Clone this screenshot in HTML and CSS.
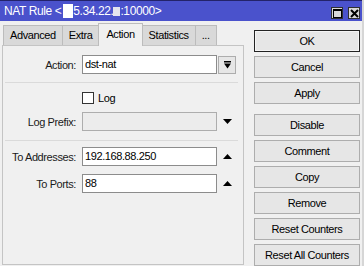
FILE: index.html
```html
<!DOCTYPE html>
<html lang="en">
<head>
    <meta charset="UTF-8">
    <meta name="viewport" content="width=device-width, initial-scale=1.0">
    <title>NAT Rule</title>
    <link rel="stylesheet" href="styles.css">
</head>
<body>
    <div class="window">
        <div class="titlebar">
            <span class="title">NAT Rule &lt;<span class="mask mask-a"></span>5.34.22.<span class="mask mask-b"></span>:10000&gt;</span>
            <div class="title-btns">
                <span class="tbtn">
                    <svg width="9" height="9" viewBox="0 0 9 9"><rect x="0.5" y="0.5" width="8" height="8" fill="none" stroke="#000"/><line x1="0" y1="1.5" x2="9" y2="1.5" stroke="#000"/></svg>
                </span>
                <span class="tbtn">
                    <svg width="9" height="9" viewBox="0 0 9 9"><path d="M1 1 L8 8 M8 1 L1 8" stroke="#000" stroke-width="2"/></svg>
                </span>
            </div>
        </div>

        <div class="main">
            <div class="left">
                <div class="tabs">
                    <span class="tab">Advanced</span>
                    <span class="tab">Extra</span>
                    <span class="tab active">Action</span>
                    <span class="tab">Statistics</span>
                    <span class="tab">...</span>
                </div>

                <div class="panel">
                    <div class="row">
                        <span class="label">Action:</span>
                        <span class="field">dst-nat</span>
                        <span class="dd">
                            <svg width="7" height="8" viewBox="0 0 7 8"><rect x="0" y="0" width="7" height="1.5" fill="#000"/><path d="M0 2.5 H7 L3.5 7.5 Z" fill="#000"/></svg>
                        </span>
                    </div>

                    <div class="sep"></div>

                    <div class="row check-row">
                        <span class="label"></span>
                        <span class="check"><span class="box"></span>Log</span>
                    </div>

                    <div class="row">
                        <span class="label">Log Prefix:</span>
                        <span class="field disabled"></span>
                        <span class="trail">
                            <svg width="9" height="5" viewBox="0 0 9 5"><path d="M0 0 H9 L4.5 5 Z" fill="#000"/></svg>
                        </span>
                    </div>

                    <div class="sep sep-2"></div>

                    <div class="row row-addr">
                        <span class="label">To Addresses:</span>
                        <span class="field">192.168.88.250</span>
                        <span class="trail">
                            <svg width="9" height="5" viewBox="0 0 9 5"><path d="M0 5 H9 L4.5 0 Z" fill="#000"/></svg>
                        </span>
                    </div>

                    <div class="row row-ports">
                        <span class="label">To Ports:</span>
                        <span class="field">88</span>
                        <span class="trail">
                            <svg width="9" height="5" viewBox="0 0 9 5"><path d="M0 5 H9 L4.5 0 Z" fill="#000"/></svg>
                        </span>
                    </div>
                </div>
            </div>

            <div class="buttons">
                <span class="btn default">OK</span>
                <span class="btn">Cancel</span>
                <span class="btn">Apply</span>
                <span class="btn group">Disable</span>
                <span class="btn">Comment</span>
                <span class="btn">Copy</span>
                <span class="btn">Remove</span>
                <span class="btn">Reset Counters</span>
                <span class="btn">Reset All Counters</span>
            </div>
        </div>
    </div>
</body>
</html>
```

FILE: styles.css
```css
* {
    margin: 0;
    padding: 0;
    box-sizing: border-box;
}

body {
    font-family: 'Liberation Sans', Arial, sans-serif;
    font-size: 11px;
    letter-spacing: -0.4px;
    color: #000;
    background: #f0f0f0;
    width: 364px;
    height: 266px;
    overflow: hidden;
}

.window {
    display: flex;
    flex-direction: column;
    height: 266px;
    border-right: 2px solid #d6d6d6;
}

/* title bar */
.titlebar {
    height: 24px;
    background: #4a52cc;
    border-top: 1px solid #23236a;
    display: flex;
    align-items: center;
    justify-content: space-between;
    padding: 0 2px 0 4px;
}

.title {
    color: #fff;
    font-size: 12px;
    display: flex;
    align-items: center;
}

.mask {
    display: inline-block;
    background: #fff;
}

.mask-a {
    width: 10px;
    height: 14px;
    margin-left: 2px;
}

.mask-b {
    width: 7px;
    height: 9px;
    background: #e4e4ee;
}

.title-btns {
    display: flex;
    gap: 5px;
    margin-top: 4px;
}

.tbtn {
    width: 12px;
    height: 12px;
    background: #d8d8d8;
    border: 1px solid #303030;
    display: flex;
    align-items: center;
    justify-content: center;
}

/* main area */
.main {
    display: flex;
    padding: 2px 0 0 2px;
}

.left {
    width: 242px;
}

.tabs {
    display: flex;
    align-items: flex-end;
    height: 22px;
    padding-left: 1px;
}

.tab {
    height: 20px;
    line-height: 19px;
    padding: 0 6px;
    background: #d9d9d9;
    border: 1px solid #bcbcbc;
    border-bottom: none;
    margin-right: -1px;
}

.tab.active {
    height: 23px;
    line-height: 20px;
    background: #f0f0f0;
    position: relative;
    z-index: 1;
    margin-bottom: -1px;
    padding: 0 7px;
}

.panel {
    height: 220px;
    border: 1px solid #c4c4c4;
    padding-top: 9px;
}

.row {
    display: flex;
    align-items: center;
    height: 19px;
}

.label {
    width: 73px;
    margin-right: 6px;
    text-align: right;
    color: #1a1a1a;
}

.field {
    width: 135px;
    height: 19px;
    line-height: 17px;
    background: #fff;
    border: 1px solid #8c8c8c;
    padding-left: 2px;
}

.field.disabled {
    background: #ececec;
    border-color: #adadad;
}

.dd {
    width: 18px;
    height: 18px;
    margin-left: 1px;
    background: #e6e6e6;
    border: 1px solid #adadad;
    display: flex;
    align-items: center;
    justify-content: center;
}

.trail {
    width: 18px;
    margin-left: 1px;
    display: flex;
    justify-content: center;
}

.sep {
    height: 1px;
    margin: 8px 5px 0 2px;
    background: #dadada;
}

.check-row {
    height: 13px;
    margin: 8px 0;
}

.check {
    display: flex;
    align-items: center;
    gap: 4px;
}

.box {
    width: 12px;
    height: 12px;
    background: #fff;
    border: 1px solid #333;
}

.sep-2 {
    margin-top: 9px;
}

.row-addr {
    margin-top: 6px;
}

.row-ports {
    margin-top: 8px;
}

/* command buttons */
.buttons {
    width: 106px;
    margin: 7px 0 0 10px;
    display: flex;
    flex-direction: column;
    gap: 4px;
}

.btn {
    height: 22px;
    line-height: 20px;
    text-align: center;
    background: #e6e6e6;
    border: 1px solid #adadad;
    flex-shrink: 0;
}

.btn.default {
    border-color: #222;
    box-shadow: inset 0 0 0 1px #f4f4f4;
}

.btn.group {
    margin-top: 6px;
}
```
